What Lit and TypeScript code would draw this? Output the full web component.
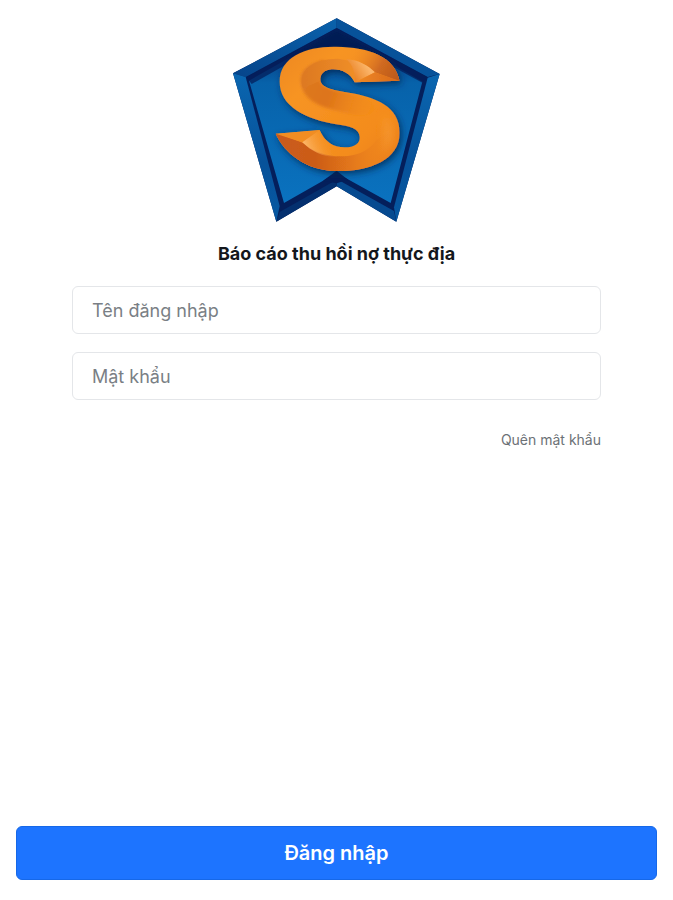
import { LitElement, html, css } from "lit";
import { customElement, state } from "lit/decorators.js";

@customElement("brand-logo")
export class BrandLogo extends LitElement {
  static styles = css`
    :host { display: block; }
    .logo { display: block; width: 226px; height: 220px; }
  `;

  render() {
    return html`
      <svg class="logo" viewBox="3 0 678 660" role="img" aria-label="Logo">
        <defs>
          <linearGradient id="panel" x1="0" y1="0" x2="0" y2="1">
            <stop offset="0" stop-color="#05225a" />
            <stop offset=".12" stop-color="#063a80" />
            <stop offset=".3" stop-color="#0762aa" />
            <stop offset="1" stop-color="#0a72bf" />
          </linearGradient>
          <linearGradient id="side" x1="0" y1="0" x2="0" y2="1">
            <stop offset="0" stop-color="#0a66b0" />
            <stop offset=".6" stop-color="#07529a" />
            <stop offset="1" stop-color="#0658a2" />
          </linearGradient>
          <linearGradient id="roofLeft" x1="0" y1="1" x2="1" y2="0">
            <stop offset="0" stop-color="#06448a" />
            <stop offset="1" stop-color="#0a62ac" />
          </linearGradient>
          <linearGradient id="body" x1="0" y1="0" x2="1" y2="1">
            <stop offset="0" stop-color="#ea841f" />
            <stop offset=".3" stop-color="#f79424" />
            <stop offset=".7" stop-color="#f48c1a" />
            <stop offset="1" stop-color="#e67a1c" />
          </linearGradient>
          <linearGradient id="fold" gradientUnits="userSpaceOnUse" x1="230" y1="200" x2="470" y2="290">
            <stop offset="0" stop-color="#de7a22" />
            <stop offset=".4" stop-color="#dd741a" />
            <stop offset="1" stop-color="#f08a1c" stop-opacity="0" />
          </linearGradient>
          <linearGradient id="crown" gradientUnits="userSpaceOnUse" x1="250" y1="0" x2="400" y2="0">
            <stop offset="0" stop-color="#de7a22" />
            <stop offset="1" stop-color="#f08f28" />
          </linearGradient>
          <linearGradient id="under" gradientUnits="userSpaceOnUse" x1="158" y1="0" x2="500" y2="0">
            <stop offset="0" stop-color="#c95a1c" />
            <stop offset=".35" stop-color="#cc5c18" />
            <stop offset=".65" stop-color="#e2761a" />
            <stop offset="1" stop-color="#f08622" stop-opacity="0" />
          </linearGradient>
          <linearGradient id="tipTop" gradientUnits="userSpaceOnUse" x1="390" y1="130" x2="520" y2="205">
            <stop offset="0" stop-color="#ee8a26" stop-opacity="0" />
            <stop offset=".6" stop-color="#d06a20" />
            <stop offset="1" stop-color="#bc5a1c" />
          </linearGradient>
          <linearGradient id="shineTop" gradientUnits="userSpaceOnUse" x1="382" y1="195" x2="430" y2="165">
            <stop offset="0" stop-color="#ea8122" />
            <stop offset="1" stop-color="#fbb56a" />
          </linearGradient>
          <linearGradient id="tipBase" gradientUnits="userSpaceOnUse" x1="395" y1="0" x2="530" y2="0">
            <stop offset="0" stop-color="#f08a24" />
            <stop offset="1" stop-color="#d8691c" />
          </linearGradient>
          <linearGradient id="shineLow" gradientUnits="userSpaceOnUse" x1="240" y1="410" x2="320" y2="375">
            <stop offset="0" stop-color="#fdbb72" />
            <stop offset="1" stop-color="#f48f20" stop-opacity="0" />
          </linearGradient>
          <filter id="shade" x="-20%" y="-20%" width="140%" height="140%">
            <feDropShadow dx="6" dy="8" stdDeviation="11" flood-color="#03264f" flood-opacity=".8" />
          </filter>
          <filter id="soft" x="-20%" y="-20%" width="140%" height="140%">
            <feGaussianBlur stdDeviation="4" />
          </filter>
          <filter id="glow" x="-50%" y="-50%" width="200%" height="200%">
            <feGaussianBlur stdDeviation="14" />
          </filter>
          <clipPath id="letter">
            <path d="M530 212 L395 217 C382 188 352 176 325 178 C302 180 290 194 292 212 C296 234 335 241 382 249 C456 262 530 288 530 368 C530 450 440 483 345 483 C250 483 185 430 158 371 L290 360 C305 395 330 412 365 412 C395 412 412 400 410 380 C408 355 380 349 340 343 C250 327 170 290 170 215 C170 140 250 108 340 110 C440 112 515 140 530 212Z" />
          </clipPath>
        </defs>
        <path fill="#041f5b" d="M341 25 650 192 520 635 341 529 160 635 30 190Z" />
        <path fill="url(#roofLeft)" d="M30 190 341 25V54L68 201Z" />
        <path fill="#07529a" d="M341 25 650 192 614 201 341 54Z" />
        <path fill="url(#side)" d="M30 190 68 201 170 588 160 635Z" />
        <path fill="url(#side)" d="M650 192 614 203 513 592 520 635Z" />
        <path fill="#064a90" d="M520 635 341 529V507L513 603Z" />
        <path fill="#04306f" d="M160 635 341 529V509L170 606Z" />
        <path fill="url(#panel)" d="M341 64 598 215 503 579 341 489 183 579 78 212Z" />
        <path fill="#041f5b" d="M341 54 612 200 598 218 341 78 86 222 70 202Z" opacity=".75" />
        <path fill="#041f55" filter="url(#soft)" d="M341 62 490 145H192Z" />
        <path fill="#041f5b" d="M341 482 375 509 341 520 300 512Z" />
        <g filter="url(#shade)">
          <g clip-path="url(#letter)">
            <path fill="url(#body)" d="M140 90H550V500H140Z" />
            <path fill="#fdaa4c" opacity=".7" filter="url(#glow)" d="M480 310C510 340 515 400 475 430C490 390 490 350 480 310Z" />
            <path fill="url(#fold)" filter="url(#soft)" d="M300 150C250 165 232 185 233 212C236 284 320 296 380 312C430 322 450 310 470 300C440 262 382 249 382 249C335 241 296 234 292 212C288 190 305 178 325 170Z" />
            <path fill="url(#crown)" d="M395 217C382 188 352 176 325 178C302 180 290 194 292 212L240 235C222 180 270 146 345 146L420 160Z" />
            <path fill="url(#under)" d="M150 365 240 398C275 430 320 442 375 438C410 434 440 420 460 390L540 340V500H200Z" />
            <path fill="url(#tipTop)" d="M360 140C400 146 430 164 455 187L535 216V190C510 130 430 108 380 112Z" />
            <path fill="url(#shineTop)" d="M370 148C408 150 434 166 456 187L395 217C398 187 388 163 370 148Z" />
            <path fill="url(#tipBase)" d="M395 218 456 187 532 213Z" />
            <path fill="#f18d22" d="M158 371 290 360 242 398Z" />
            <path fill="url(#shineLow)" d="M238 397 290 360C305 395 330 412 370 412L340 441C295 440 265 423 238 397Z" />
          </g>
        </g>
      </svg>
    `;
  }
}

@customElement("app-root")
export class AppRoot extends LitElement {
  @state() private username = "";
  @state() private password = "";

  static styles = css`
    :host {
      display: block;
      font-family: Inter, "Noto Sans", sans-serif;
      color: #14171c;
      background: #fff;
    }
    .page {
      box-sizing: border-box;
      min-height: 100vh;
      padding: 10px 16px 20px;
      display: flex;
      flex-direction: column;
    }
    .intro { display: flex; flex-direction: column; align-items: center; }
    .title { margin: 12px 0 20px; font-size: 18px; line-height: 24px; font-weight: 700; text-align: center; }
    .fields { margin: 0 56px; display: flex; flex-direction: column; gap: 18px; }
    .field {
      box-sizing: border-box;
      width: 100%;
      height: 48px;
      padding: 0 19px;
      border: 1px solid #e4e6e9;
      border-radius: 6px;
      background: #fff;
      color: #14171c;
      font: 400 18px/24px Inter, "Noto Sans", sans-serif;
    }
    .field::placeholder { color: #7a7f85; opacity: 1; }
    .forgot {
      align-self: flex-end;
      margin-top: 12px;
      font-size: 14px;
      line-height: 20px;
      color: #6c7176;
      text-decoration: none;
    }
    .submit {
      margin-top: auto;
      height: 54px;
      border: 1px solid #1668e8;
      border-radius: 6px;
      background: #1d74ff;
      color: #fff;
      font: 600 20px/24px Inter, "Noto Sans", sans-serif;
      cursor: pointer;
    }
  `;

  private submit(event: Event) {
    event.preventDefault();
  }

  render() {
    return html`
      <form class="page" @submit=${this.submit}>
        <header class="intro">
          <brand-logo></brand-logo>
          <h1 class="title">Báo cáo thu hồi nợ thực địa</h1>
        </header>
        <div class="fields">
          <input class="field" type="text" aria-label="Tên đăng nhập" placeholder="Tên đăng nhập"
            autocomplete="username" .value=${this.username}
            @input=${(e: Event) => (this.username = (e.target as HTMLInputElement).value)} />
          <input class="field" type="password" aria-label="Mật khẩu" placeholder="Mật khẩu"
            autocomplete="current-password" .value=${this.password}
            @input=${(e: Event) => (this.password = (e.target as HTMLInputElement).value)} />
          <a class="forgot" href="#">Quên mật khẩu</a>
        </div>
        <button class="submit" type="submit">Đăng nhập</button>
      </form>
    `;
  }
}
